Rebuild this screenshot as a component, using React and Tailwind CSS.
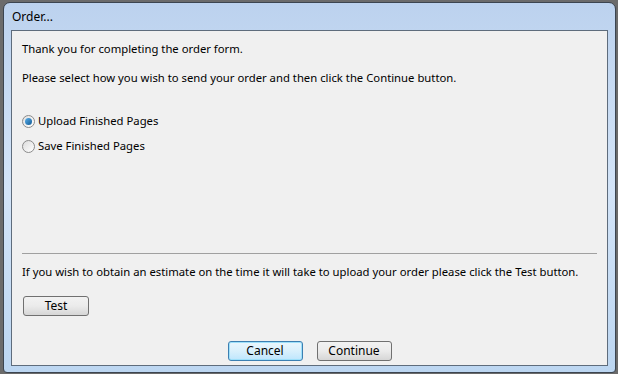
export default function App() {
  const font = { fontFamily: '"Segoe UI", "Noto Sans", "Open Sans", sans-serif' };
  return (
    <div className="w-[618px] h-[374px] bg-[#6b6b6b] overflow-hidden pt-[2px] pl-[3px]" style={font}>
      <div className="w-[613px] h-[371px] rounded-t-[7px] rounded-b-[4px] border border-[#3c4550] bg-gradient-to-b from-[#bcd2ee] via-[#d3e4f8] to-[#bcd6f1] flex flex-col px-[7px] pb-[6px]">
        {/* title bar */}
        <div className="h-[27px] flex items-center pl-[1px] text-[12px] text-black">Order...</div>
        {/* client area */}
        <div className="flex-1 border border-[#5e6c7c] bg-[#f0f0f0] flex flex-col px-[10px] text-[11.3px] text-black">
          <p className="mt-[10px] leading-[16px]">Thank you for completing the order form.</p>
          <p className="mt-[13px] leading-[16px]">Please select how you wish to send your order and then click the Continue button.</p>

          <div className="mt-[27px] flex flex-col gap-[9px]">
            <label className="flex items-center gap-[3px] leading-[16px]">
              <span className="w-[13px] h-[13px] rounded-full border border-[#8b8b8b] bg-gradient-to-br from-[#e0e0e0] to-white flex items-center justify-center">
                <span className="w-[7px] h-[7px] rounded-full bg-gradient-to-br from-[#5ab0ec] to-[#0d5a94]" />
              </span>
              Upload Finished Pages
            </label>
            <label className="flex items-center gap-[3px] leading-[16px]">
              <span className="w-[13px] h-[13px] rounded-full border border-[#8b8b8b] bg-gradient-to-br from-[#dcdcdc] to-white" />
              Save Finished Pages
            </label>
          </div>

          <div className="flex-1" />
          <div className="h-px bg-[#a0a0a0] mb-[10px]" />
          <p className="leading-[16px] whitespace-nowrap">If you wish to obtain an estimate on the time it will take to upload your order please click the Test button.</p>
          <div className="mt-[16px]">
            <button className="w-[66px] h-[20px] ml-[1px] rounded-[3px] border border-[#707070] bg-gradient-to-b from-[#f2f2f2] via-[#ebebeb] to-[#d6d6d6] text-[12px] leading-none">Test</button>
          </div>
          <div className="flex justify-center gap-[14px] mt-[25px] mb-[4px]">
            <button className="w-[75px] h-[20px] rounded-[3px] border border-[#3c7fb1] bg-gradient-to-b from-[#eaf6fd] via-[#d9f0fc] to-[#bee6fd] text-[12px] leading-none shadow-[inset_0_0_0_1px_#9ee0fa]">Cancel</button>
            <button className="w-[75px] h-[20px] rounded-[3px] border border-[#707070] bg-gradient-to-b from-[#f2f2f2] via-[#ebebeb] to-[#d6d6d6] text-[12px] leading-none">Continue</button>
          </div>
        </div>
      </div>
    </div>
  );
}
